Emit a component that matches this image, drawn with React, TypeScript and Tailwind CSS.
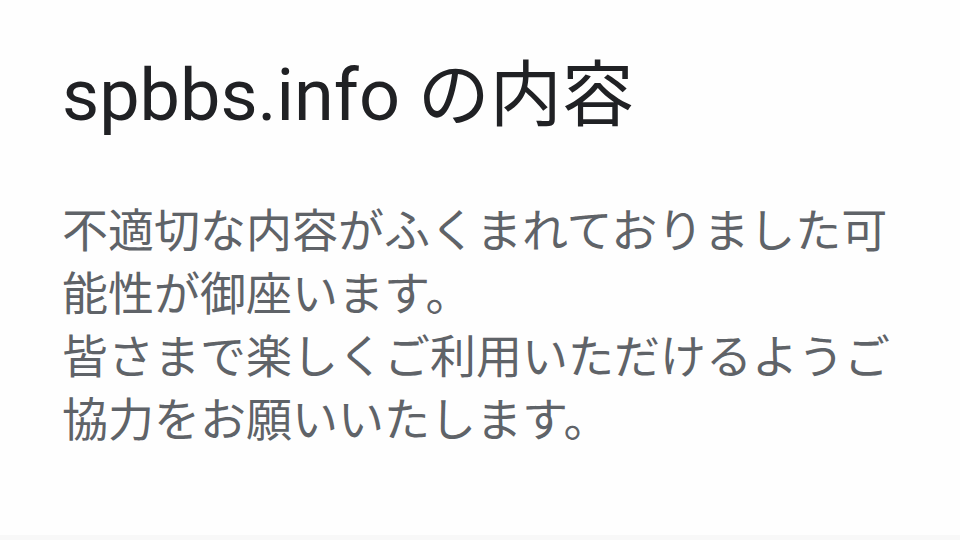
export default function App() {
  return (
    <div className="w-[960px] h-[540px] bg-[#fefefe] flex flex-col overflow-hidden">
      <div className="flex-1 pl-[62px] pt-[56px]">
        <h1 className="text-[72px] leading-[80px] text-[#202124] whitespace-nowrap" style={{ fontFamily: 'Roboto, "Noto Sans CJK JP", sans-serif' }}>
          spbbs.info の内容
        </h1>
        <div className="mt-[64px] text-[46px] leading-[63px] text-[#5f6368] whitespace-nowrap" style={{ fontFamily: 'Roboto, "Noto Sans CJK JP", sans-serif' }}>
          <p>不適切な内容がふくまれておりました可</p>
          <p>能性が御座います。</p>
          <p>皆さまで楽しくご利用いただけるようご</p>
          <p>協力をお願いいたします。</p>
        </div>
      </div>
      <div className="h-[5px] bg-[#f8f8f8]" />
    </div>
  );
}
